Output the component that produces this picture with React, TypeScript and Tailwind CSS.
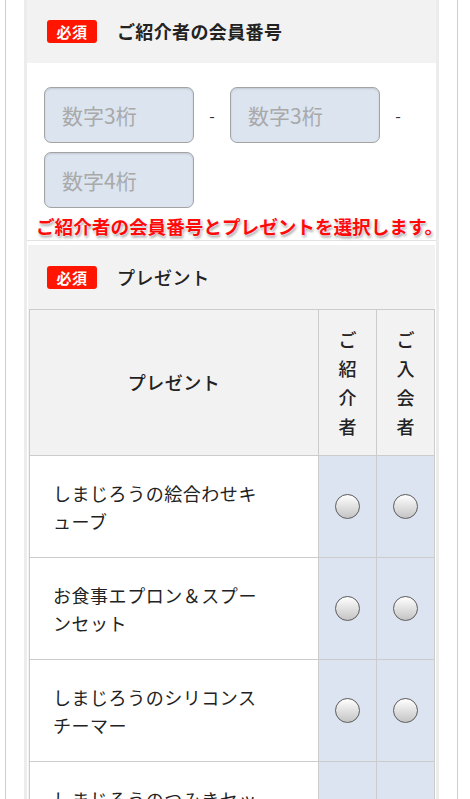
import React from 'react';

const font = { fontFamily: '"Noto Sans CJK JP", "Noto Sans", sans-serif' };

const Badge = () => (
  <span className="inline-flex h-[23px] w-[50px] items-center justify-center rounded-[3px] bg-[#ff1500] text-[15px] font-bold leading-none tracking-[0.04em] text-white">
    必須
  </span>
);

const NumberBox = ({ placeholder }: { placeholder: string }) => (
  <input
    type="text"
    placeholder={placeholder}
    className="h-[56px] w-[150px] rounded-[7px] border border-[#a3a3a3] bg-[#dbe4ef] pl-[17px] text-[21px] text-[#333] outline-none placeholder:text-[#a9a9a9] shadow-[inset_0_1px_2px_rgba(0,0,0,0.12)]"
  />
);

const Dash = () => <span className="flex h-[56px] w-[36px] items-center justify-center text-[16px] text-[#333]">-</span>;

const Radio = () => (
  <span className="inline-block h-[25px] w-[25px] rounded-full border-[1.5px] border-[#5c5c5c] bg-gradient-to-b from-white to-[#c4c4c4]" />
);

const presents = [
  'しまじろうの絵合わせキューブ',
  'お食事エプロン＆スプーンセット',
  'しまじろうのシリコンスチーマー',
  'しまじろうのつみきセット',
];

export default function App() {
  return (
    <div className="min-h-screen bg-white" style={font}>
      <div className="ml-[5px] w-[453px] min-h-[799px] border-x border-[#cfcfcf] pl-[18px] pr-[18px]">
        <div className="border-x-[3px] border-[#ececec]">
          {/* ご紹介者の会員番号 */}
          <section>
            <div className="flex h-[63px] items-center gap-[20px] bg-[#f2f2f2] pl-[20px]">
              <Badge />
              <h2 className="text-[18px] font-bold tracking-[0.02em] text-[#222]">ご紹介者の会員番号</h2>
            </div>
            <div className="border-b border-[#e2e2e2] bg-white pl-[17px] pt-[24px]">
              <div className="flex flex-wrap gap-y-[9px]">
                <NumberBox placeholder="数字3桁" />
                <Dash />
                <NumberBox placeholder="数字3桁" />
                <Dash />
                <NumberBox placeholder="数字4桁" />
              </div>
              <p className="-ml-[8px] whitespace-nowrap pb-[2px] pt-[6px] text-[18.6px] font-bold leading-[24px] text-[#ff0a0a] [text-shadow:0_0_2px_#fff,0_0_2px_#fff,1px_2px_3px_rgba(0,0,0,0.45)]">
                ご紹介者の会員番号とプレゼントを選択します。
              </p>
            </div>
          </section>

          {/* プレゼント */}
          <section className="mt-[3px] border border-white bg-[#f2f2f2]">
            <div className="flex h-[64px] items-center gap-[20px] pl-[19px]">
              <Badge />
              <h2 className="text-[18px] font-medium tracking-[0.03em] text-[#222]">プレゼント</h2>
            </div>
            <table className="ml-[1px] w-[406px] border-collapse text-[#222]">
              <thead>
                <tr className="h-[146px] bg-[#f2f2f2]">
                  <th className="w-[289px] border border-[#cccccc] text-[18px] font-medium tracking-[0.03em]">プレゼント</th>
                  <th className="w-[58px] border border-[#cccccc] text-[18px] font-medium leading-[29px]">
                    <div className="flex flex-col items-center">
                      <span>ご</span><span>紹</span><span>介</span><span>者</span>
                    </div>
                  </th>
                  <th className="w-[58px] border border-[#cccccc] text-[18px] font-medium leading-[29px]">
                    <div className="flex flex-col items-center">
                      <span>ご</span><span>入</span><span>会</span><span>者</span>
                    </div>
                  </th>
                </tr>
              </thead>
              <tbody>
                {presents.map(p => (
                  <tr key={p} className="h-[102px]">
                    <td className="border border-[#cccccc] bg-white pl-[23px]">
                      <div className="w-[212px] text-[18px] leading-[28px] tracking-[0.03em]">{p}</div>
                    </td>
                    <td className="border border-[#cccccc] bg-[#dbe4f0] text-center align-middle">
                      <div className="flex justify-center"><Radio /></div>
                    </td>
                    <td className="border border-[#cccccc] bg-[#dbe4f0] text-center align-middle">
                      <div className="flex justify-center"><Radio /></div>
                    </td>
                  </tr>
                ))}
              </tbody>
            </table>
          </section>
        </div>
      </div>
    </div>
  );
}
